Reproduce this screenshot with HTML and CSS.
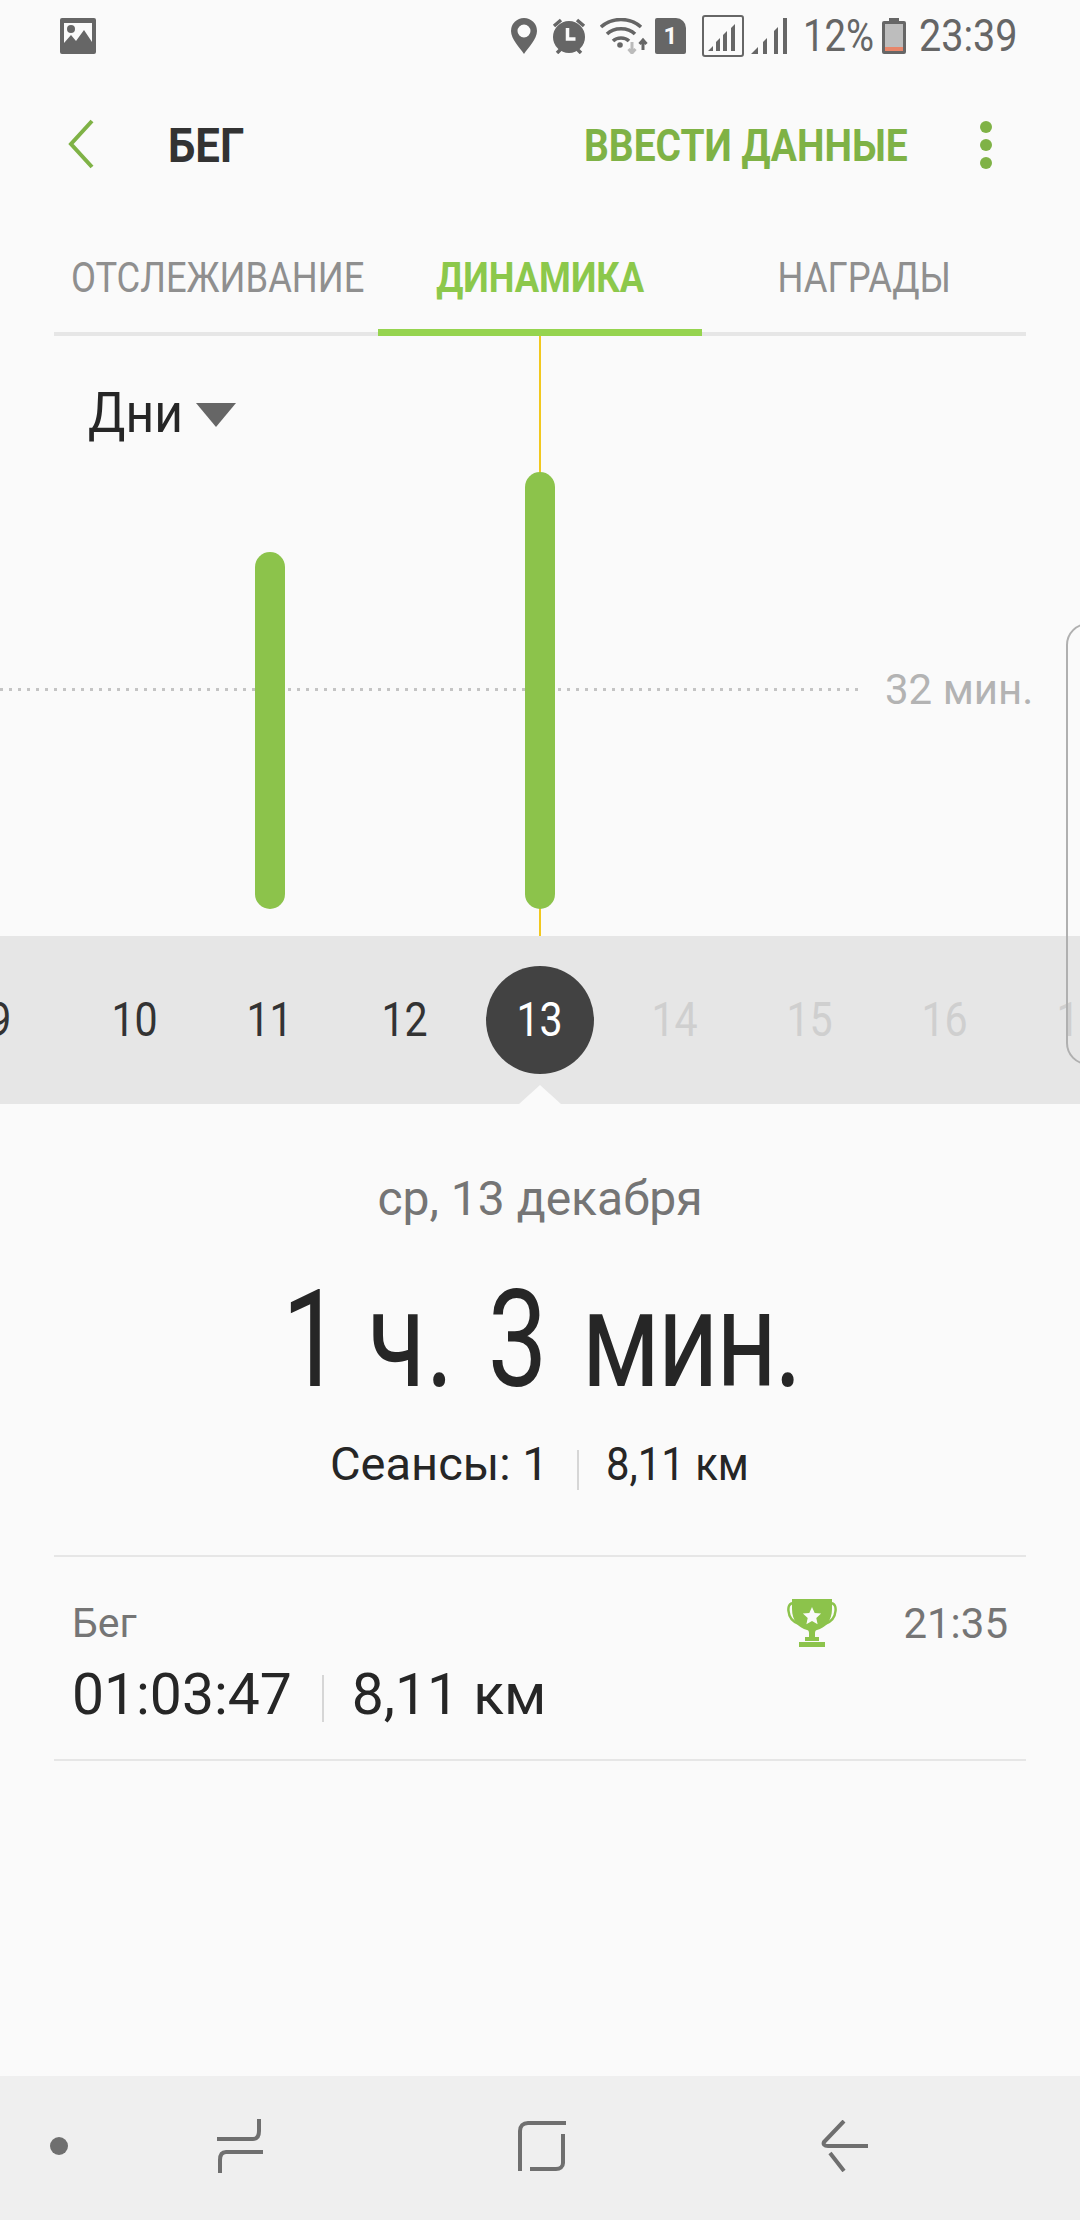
FILE: index.html
```html
<!DOCTYPE html>
<html lang="ru">
<head>
<meta charset="utf-8">
<title>Бег</title>
<link rel="stylesheet" href="styles.css">
</head>
<body>
<div class="screen">
  <header class="status">
    <svg class="ic-gallery" width="36" height="36" viewBox="0 0 36 36"><path fill="#666" fill-rule="evenodd" d="M2 0h32a2 2 0 0 1 2 2v32a2 2 0 0 1-2 2H2a2 2 0 0 1-2-2V2a2 2 0 0 1 2-2zM4 5v20l7-8 5 6 8-11 8 12V5z"/><circle cx="11" cy="11" r="4" fill="#666"/></svg>
    <div class="status-right">
      <svg width="26" height="36" viewBox="0 0 26 36"><path fill="#666" fill-rule="evenodd" d="M13 0a13 13 0 0 1 13 13c0 8-9 17-13 23C9 30 0 21 0 13A13 13 0 0 1 13 0zm0 6.500a6.500 6.500 0 1 0 0 13 6.500 6.500 0 0 0 0-13z"/></svg>
      <svg class="gap-14" width="36" height="36" viewBox="0 0 36 36"><circle cx="18" cy="19" r="16" fill="#666"/><path d="M3 8l7-6M33 8l-7-6M6 35l4-4M30 35l-4-4" stroke="#666" stroke-width="3.500"/><path d="M16.500 10v11h8" stroke="#fafafa" stroke-width="3.500" fill="none"/></svg>
      <svg class="gap-13" width="48" height="36" viewBox="0 0 48 36"><path d="M1 9c11-10 29-10 40 0M7 16c7-7 21-7 28 0M13 23c4-4 12-4 16 0" stroke="#666" stroke-width="3.500" fill="none"/><circle cx="20" cy="27" r="2.800" fill="#666"/><path d="M32 24v11M28.500 31l3.500 4 3.500-4" stroke="#bbb" stroke-width="3" fill="none"/><path d="M43 32V22M39.500 26l3.500-4 3.500 4" stroke="#666" stroke-width="3" fill="none"/></svg>
      <div class="sim">1</div>
      <svg class="gap-16" width="42" height="42" viewBox="0 0 42 42"><rect x="1" y="1" width="40" height="40" rx="2" fill="none" stroke="#666" stroke-width="2"/><path fill="#666" d="M6 36l5-5v5zM14 36v-9l4-4v13zM21 36V20l4-4v20zM29 36V13l4-4v27z"/></svg>
      <svg class="gap-7" width="36" height="36" viewBox="0 0 36 36"><path fill="#666" d="M0 36l7-7v7zM12 36V24l4-4v16zM23 36V13l4-4v27zM32 36V0l4 0v36z"/></svg>
      <span class="status-text pct">12%</span>
      <svg class="gap-10" width="24" height="36" viewBox="0 0 24 36"><path fill="#666" d="M7 0h10v3h5a2 2 0 0 1 2 2v29a2 2 0 0 1-2 2H2a2 2 0 0 1-2-2V5a2 2 0 0 1 2-2h5z"/><rect x="3" y="6" width="18" height="27" fill="#bdbdbd"/><rect x="3" y="29" width="18" height="4" fill="#e8866a"/></svg>
      <span class="status-text clock">23:39</span>
    </div>
  </header>

  <div class="appbar">
    <svg class="back" width="26" height="50" viewBox="0 0 26 50"><path d="M24 2L3 25l21 23" fill="none" stroke="#7fb246" stroke-width="4"/></svg>
    <h1 class="title">БЕГ</h1>
    <span class="action">ВВЕСТИ ДАННЫЕ</span>
    <div class="more"><i></i><i></i><i></i></div>
  </div>

  <nav class="tabs">
    <div class="tab first"><span>ОТСЛЕЖИВАНИЕ</span></div>
    <div class="tab active"><span>ДИНАМИКА</span></div>
    <div class="tab"><span>НАГРАДЫ</span></div>
  </nav>

  <section class="chart">
    <div class="cursor"></div>
    <div class="goal"><span class="goal-line"></span><span class="goal-label">32 мин.</span></div>
    <div class="range"><span class="range-text">Дни</span><i class="tri"></i></div>
    <div class="bars">
      <div class="bar-slot"><div class="bar" style="height:357px"></div></div>
      <div class="bar-slot"><div class="bar" style="height:437px"></div></div>
    </div>
    <div class="handle"></div>
  </section>

  <div class="days">
    <div class="day first"><span>9</span></div>
    <div class="day"><span>10</span></div>
    <div class="day"><span>11</span></div>
    <div class="day"><span>12</span></div>
    <div class="day sel"><div class="disc"><span>13</span></div></div>
    <div class="day off"><span>14</span></div>
    <div class="day off"><span>15</span></div>
    <div class="day off"><span>16</span></div>
    <div class="day off"><span>17</span></div>
    <i class="notch"></i>
  </div>

  <section class="summary">
    <div class="date">ср, 13 декабря</div>
    <div class="total"><span class="total-in">1 ч.<span class="wide"> 3 <span class="tight">мин.</span></span></span></div>
    <div class="sub"><span class="sub-a">Сеансы: 1</span><i class="sep"></i><span class="sub-b">8,11 км</span></div>
  </section>

  <section class="row">
    <div class="row-top">
      <span class="muted">Бег</span>
      <svg class="trophy" width="50" height="48" viewBox="0 0 50 48"><path fill="none" stroke="#8cc34b" stroke-width="2.500" d="M7 4C2 4 1 8 1.500 12 2 18 6 23 12 25M43 4c5 0 6 4 5.500 8C48 18 44 23 38 25"/><path fill="#8cc34b" d="M5 0h40v10c0 12-7 19-15 21-1 0-2 1-2 3v4h-6v-4c0-2-1-3-2-3C12 29 5 22 5 10zM18 38h14v4H18zM12 43h26v5H12z"/><path fill="#fafafa" d="M25 8l2.700 5.900 6.400.7-4.800 4.300 1.300 6.300-5.600-3.200-5.600 3.200 1.300-6.300-4.800-4.300 6.400-.7z"/></svg>
      <span class="muted time">21:35</span>
    </div>
    <div class="row-main"><span>01:03:47</span><i class="sep tall"></i><span>8,11 км</span></div>
  </section>

  <footer class="navbar">
    <svg width="18" height="30" viewBox="0 0 18 30" class="nav-dot"><circle cx="9" cy="15" r="9" fill="#6f6f6f"/></svg>
    <svg class="nav-recents" width="46" height="54" viewBox="0 0 46 54"><path fill="none" stroke="#6f6f6f" stroke-width="4" d="M0 20h36c4 0 6-3 6-8V0M46 33H9c-4 0-6 3-6 8v13"/></svg>
    <svg class="nav-home" width="48" height="50" viewBox="0 0 48 50"><path fill="none" stroke="#6f6f6f" stroke-width="4" d="M48 2H10C5 2 2 5 2 10v40M45 13v29c0 4-3 6-7 6H12"/></svg>
    <svg class="nav-back" width="47" height="52" viewBox="0 0 47 52"><path fill="none" stroke="#6f6f6f" stroke-width="4" d="M47 26H7C3 26 2 24 3 22L23 1M9 33l14 18"/></svg>
  </footer>
</div>
</body>
</html>
```
FILE: styles.css
```css
* { box-sizing: border-box; }
html, body { margin: 0; padding: 0; }
body { background: #fafafa; font-family: Roboto, "Liberation Sans", sans-serif; }
.screen { width: 1080px; height: 2220px; background: #fafafa; display: flex; flex-direction: column; overflow: hidden; }

.status { height: 70px; display: flex; align-items: flex-start; justify-content: space-between; padding: 18px 64px 0 60px; }
.status-right { display: flex; align-items: center; height: 36px; }
.gap-14 { margin-left: 14px; }
.gap-13 { margin-left: 13px; }
.gap-16 { margin-left: 16px; }
.gap-7 { margin-left: 7px; }
.gap-10 { margin-left: 10px; }
.sim { width: 31px; height: 36px; margin-left: 7px; background: #666; color: #fafafa; font-weight: 700; font-size: 24px; line-height: 36px; text-align: center; border-radius: 2px 10px 2px 2px; }
.status-text { font-size: 45px; color: #666; line-height: 38px; display: inline-block; white-space: nowrap; transform-origin: left center; }
.pct { width: 69px; margin-left: 16px; transform: scaleX(.85); }
.clock { width: 97px; margin-left: 13px; transform: scaleX(.88); }

.appbar { height: 140px; display: flex; align-items: center; padding: 10px 0 0 68px; }
.back { flex: none; position: relative; top: -1px; }
.title { margin: 0 0 0 74px; font-size: 48px; font-weight: 700; color: #333; flex: none; width: 416px; transform: scaleX(.91); transform-origin: left center; }
.action { flex: none; font-size: 45px; font-weight: 700; color: #7fb246; transform: scaleX(.865); transform-origin: left center; white-space: nowrap; width: 396px; }
.more { display: flex; flex-direction: column; gap: 6px; margin-left: 0; }
.more i { display: block; width: 12px; height: 12px; border-radius: 50%; background: #7fb246; }

.tabs { height: 126px; margin: 0 54px; display: grid; grid-template-columns: repeat(3, 324px); border-bottom: 4px solid #e6e6e6; }
.tab { height: 126px; padding-top: 43px; text-align: center; font-size: 42px; line-height: 50px; color: #8f8f8f; }
.tab span { display: inline-block; transform: scaleX(.865); white-space: nowrap; }
.tab.first span { margin-left: -6px; }
.tab.active { color: #8cc84b; font-weight: 700; border-bottom: 7px solid #96d44f; }

.chart { position: relative; height: 600px; }
.cursor { position: absolute; left: 539px; top: 0; width: 2px; height: 600px; background: #f2c81e; }
.goal { position: absolute; left: 0; top: 333px; width: 1080px; height: 40px; display: flex; align-items: center; }
.goal-line { width: 860px; height: 3px; background: repeating-linear-gradient(90deg, #c4c4c4 0 3px, transparent 3px 9px); }
.goal-label { margin-left: 25px; font-size: 42px; color: #b3b3b3; white-space: nowrap; }
.range { position: absolute; left: 88px; top: 42px; display: flex; align-items: center; font-size: 56px; line-height: 70px; color: #262626; }
.range-text { width: 91px; transform: scaleX(.89); transform-origin: left center; }
.tri { width: 0; height: 0; margin: 4px 0 0 17px; border-left: 20px solid transparent; border-right: 20px solid transparent; border-top: 24px solid #666; }
.bars { height: 573px; display: grid; grid-template-columns: 270px 270px; padding-left: 135px; align-items: end; }
.bar-slot { display: flex; justify-content: center; }
.bar { width: 30px; border-radius: 15px; background: #8cc34b; position: relative; }
.handle { position: absolute; left: 1066px; top: 287px; width: 30px; height: 442px; border: 2px solid #b0b0b0; border-radius: 22px 0 0 22px; z-index: 2; }

.days { position: relative; height: 168px; background: #e6e6e6; display: flex; align-items: center; }
.day { flex: none; width: 135px; text-align: center; font-size: 49px; line-height: 56px; color: #333; }
.day.first { margin-left: -68px; }
.day span { display: inline-block; transform: scaleX(.84); }
.day.off { color: #cfcfcf; }
.day.sel { display: flex; justify-content: center; }
.disc { width: 108px; height: 108px; line-height: 108px; border-radius: 50%; background: #424242; color: #fff; }
.notch { position: absolute; left: 519px; bottom: 0; width: 0; height: 0; border-left: 21px solid transparent; border-right: 21px solid transparent; border-bottom: 19px solid #fafafa; }

.summary { height: 451px; text-align: center; }
.date { padding-top: 67px; font-size: 48px; line-height: 56px; color: #757575; }
.total { margin-top: 38px; font-size: 136px; line-height: 150px; color: #262626; }
.total-in { display: inline-block; white-space: nowrap; margin-left: 2px; transform: scaleX(.78); }
.wide { word-spacing: 10px; }
.tight { letter-spacing: -3.5px; }
.sub { margin-top: 21px; padding-right: 3px; display: flex; justify-content: center; align-items: center; font-size: 47px; line-height: 56px; color: #262626; }
.sub-a { width: 215px; white-space: nowrap; }
.sub-b { width: 141px; white-space: nowrap; text-align: left; transform: scaleX(.89); transform-origin: left center; }
.sep { display: block; flex: none; width: 2px; height: 40px; margin: 12px 27px 0 32px; background: #d6d6d6; }

.row { margin: 0 54px; height: 206px; border-top: 2px solid #e6e6e6; border-bottom: 2px solid #e6e6e6; padding: 42px 18px 0; }
.row-top { display: flex; align-items: center; height: 48px; }
.muted { font-size: 41px; color: #757575; }
.trophy { margin-left: auto; }
.time { margin-left: 66px; font-size: 42px; }
.row-main { display: flex; align-items: center; margin-top: 15px; font-size: 57px; line-height: 66px; color: #262626; }
.sep.tall { height: 47px; margin: 6px 28px 0 30px; }

.navbar { margin-top: auto; height: 144px; background: #efefef; position: relative; }
.navbar svg { position: absolute; }
.nav-dot { left: 50px; top: 55px; }
.nav-recents { left: 217px; top: 43px; }
.nav-home { left: 518px; top: 45px; }
.nav-back { left: 821px; top: 44px; }
```
